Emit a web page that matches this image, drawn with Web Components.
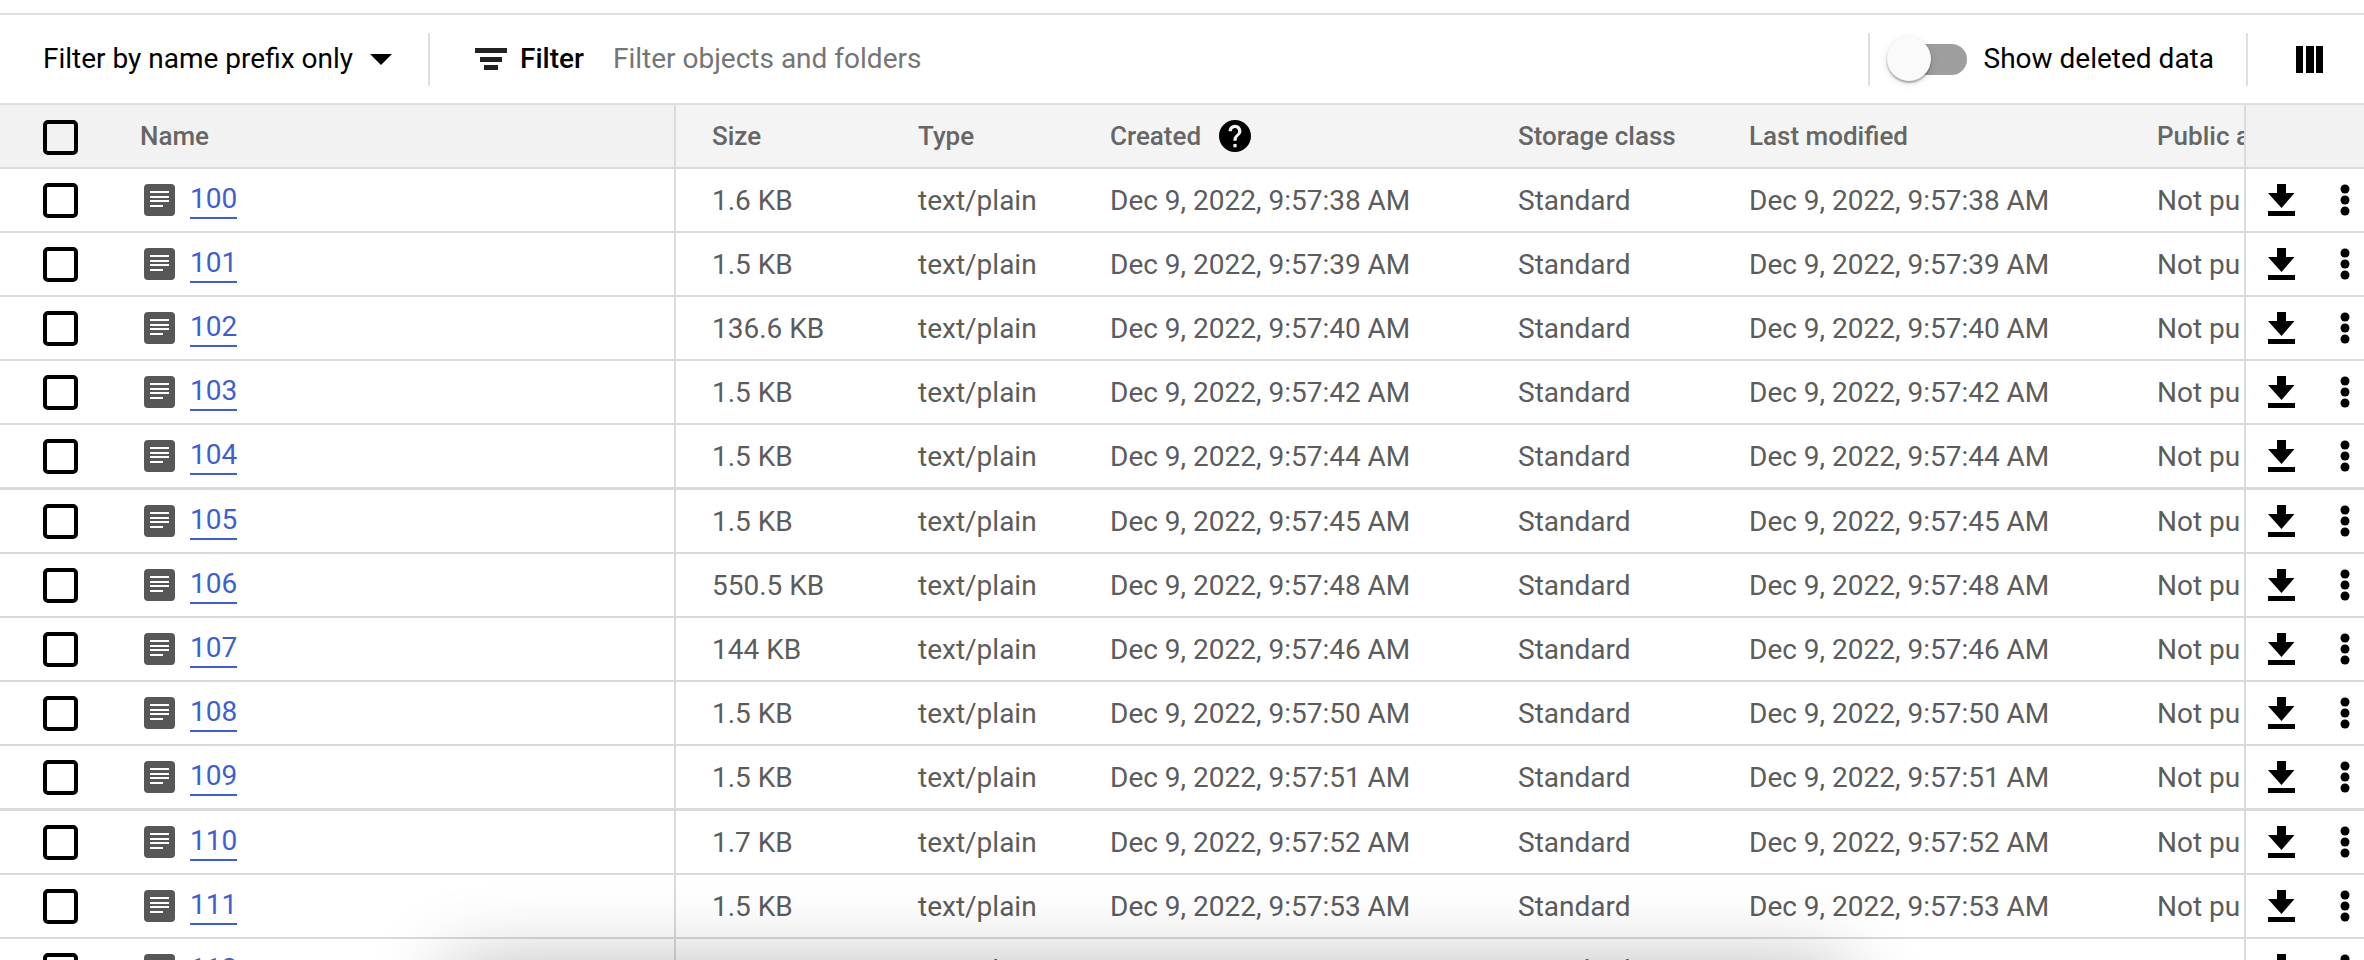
<!DOCTYPE html>
<html lang="en">
<head>
<meta charset="utf-8">
<title>Objects</title>
<style>
  body {
    margin: 0;
    background: #fff;
    font-family: Roboto, "Liberation Sans", sans-serif;
    font-size: 28px;
    overflow: hidden;
  }
</style>
</head>
<body>
<object-browser>
  <filter-bar></filter-bar>
  <object-table></object-table>
</object-browser>
<sheet-shadow></sheet-shadow>

<script>
const ICONS = {
  filter: '<path d="M0 0h32v5H0zM5 9h22v5H5zM9 17h14v5H9z" fill="#212121"/>',
  columns: '<path d="M0 0h7v27H0zM10 0h8v27h-8zM20 0h7v27h-7z"/>',
  file: '<rect width="31" height="32" rx="4" fill="#575757"/><path d="M6 7h19v2H6zM6 12h19v2H6zM6 16h19v2H6zM6 21h13v2H6z" fill="#fff"/>',
  help: '<path transform="scale(1.6) translate(-2 -2)" d="M12 2C6.48 2 2 6.48 2 12s4.48 10 10 10 10-4.48 10-10S17.52 2 12 2zm1 17h-2v-2h2v2zm2.07-7.75l-.9.92C13.45 12.9 13 13.5 13 15h-2v-.5c0-1.1.45-2.1 1.17-2.83l1.24-1.26c.37-.36.59-.86.59-1.41 0-1.1-.9-2-2-2s-2 .9-2 2H8c0-2.21 1.79-4 4-4s4 1.79 4 4c0 .88-.36 1.68-.93 2.25z"/>',
  download: '<path d="M9 0h9v9h8.500L13.500 24 0 9h9zM0 27h27v5H0z"/>',
  more: '<circle cx="5" cy="5" r="4.500"/><circle cx="5" cy="16" r="4.500"/><circle cx="5" cy="27" r="4.500"/>',
  caret: '<path d="M0 0h22L11 11z"/>',
};

function icon(name, w, h) {
  return `<svg class="${name}" width="${w}" height="${h}" viewBox="0 0 ${w} ${h}" aria-hidden="true">${ICONS[name]}</svg>`;
}

const OBJECTS = [
  ["100", "1.6 KB", "9:57:38"],
  ["101", "1.5 KB", "9:57:39"],
  ["102", "136.6 KB", "9:57:40"],
  ["103", "1.5 KB", "9:57:42"],
  ["104", "1.5 KB", "9:57:44"],
  ["105", "1.5 KB", "9:57:45"],
  ["106", "550.5 KB", "9:57:48"],
  ["107", "144 KB", "9:57:46"],
  ["108", "1.5 KB", "9:57:50"],
  ["109", "1.5 KB", "9:57:51"],
  ["110", "1.7 KB", "9:57:52"],
  ["111", "1.5 KB", "9:57:53"],
  ["112", "53.1 KB", "9:57:54"],
];

class ObjectBrowser extends HTMLElement {
  constructor() {
    super();
    this.attachShadow({ mode: "open" });
  }

  connectedCallback() {
    this.shadowRoot.innerHTML = `
      <style>
        :host {
          display: block;
          margin-top: 13px;
          border-top: 2px solid #e0e0e0;
          height: calc(100vh - 15px);
          overflow: hidden;
        }
      </style>
      <slot></slot>
    `;
  }
}

class ToggleSwitch extends HTMLElement {
  constructor() {
    super();
    this.attachShadow({ mode: "open" });
  }

  connectedCallback() {
    this.shadowRoot.innerHTML = `
      <style>
        :host { display: block; }
        label {
          display: flex;
          align-items: center;
          gap: 17px;
          line-height: 32px;
        }
        input {
          appearance: none;
          display: flex;
          align-items: center;
          margin: 0;
          width: 72px;
          height: 31px;
          border-radius: 16px;
          background: #9e9e9e;
        }
        input::before {
          content: "";
          flex: none;
          width: 44px;
          height: 44px;
          margin-left: -8px;
          border-radius: 50%;
          background: #fafafa;
          box-shadow: 0 2px 2px rgba(0,0,0, 0.3), 0 2px 8px rgba(0,0,0, 0.12);
        }
        input:checked { flex-direction: row-reverse; }
      </style>
      <label><input type="checkbox" role="switch"><slot></slot></label>
    `;
  }
}

class FilterBar extends HTMLElement {
  constructor() {
    super();
    this.attachShadow({ mode: "open" });
  }

  get styles() {
    return `
      :host {
        display: flex;
        align-items: center;
        height: 88px;
        border-bottom: 2px solid #e0e0e0;
        line-height: 32px;
      }
      button {
        font: inherit;
        color: #000;
        background: none;
        border: 0;
        padding: 0;
        display: flex;
        align-items: center;
      }
      svg { display: block; flex: none; }
      .mode { margin-left: 43px; gap: 17px; }
      .rule {
        width: 2px;
        height: 53px;
        background: #e0e0e0;
        flex: none;
      }
      .mode + .rule { margin-left: 36px; }
      label {
        display: flex;
        align-items: center;
        gap: 13px;
        margin-left: 45px;
        font-weight: 500;
      }
      .text {
        flex: 1;
        min-width: 0;
        font: inherit;
        color: #757575;
        border: 0;
        outline: 0;
        padding: 0;
        margin-left: 29px;
        background: none;
      }
      .text::placeholder { color: #757575; opacity: 1; }
      toggle-switch { margin: 0 32px 0 25px; }
      .cols { margin: 0 41px 0 48px; }
    `;
  }

  connectedCallback() {
    this.shadowRoot.innerHTML = `
      <style>${this.styles}</style>
      <button class="mode">Filter by name prefix only ${icon("caret", 22, 11)}</button>
      <div class="rule"></div>
      <label for="q">${icon("filter", 32, 22)}Filter</label>
      <input id="q" class="text" placeholder="Filter objects and folders">
      <div class="rule"></div>
      <toggle-switch>Show deleted data</toggle-switch>
      <div class="rule"></div>
      <button class="cols" aria-label="Columns">${icon("columns", 27, 27)}</button>
    `;
  }
}

class ObjectTable extends HTMLElement {
  constructor() {
    super();
    this.attachShadow({ mode: "open" });
  }

  get styles() {
    return `
      :host { display: block; color: #5c5c5c; }
      table {
        width: 100%;
        table-layout: fixed;
        border-collapse: separate;
        border-spacing: 0;
      }
      .c-check { width: 140px; }
      .c-name { width: 536px; }
      .c-size { width: 206px; }
      .c-type { width: 192px; }
      .c-created { width: 408px; }
      .c-class { width: 231px; }
      .c-modified { width: 408px; }
      .c-actions { width: 120px; }
      th, td {
        box-sizing: border-box;
        height: 64px;
        padding: 0 0 0 36px;
        border-bottom: 2px solid #dadada;
        text-align: left;
        font-weight: 400;
        line-height: 32px;
        white-space: nowrap;
        overflow: hidden;
      }
      td { padding-top: 2px; }
      th {
        background: #f4f4f4;
        color: #666;
        font-size: 26px;
        font-weight: 500;
      }
      tbody tr:nth-child(5n) td { height: 65px; border-bottom-width: 3px; }
      .check { padding: 0 0 0 43px; }
      th.check { padding-top: 2px; }
      .name { padding: 0; border-right: 2px solid #dadada; }
      .actions { padding: 0 0 0 22px; border-left: 2px solid #dadada; }
      th.name, th.check, th.actions { background: #f2f2f2; }
      .access { padding-right: 4px; }
      .access div { overflow: hidden; }
      input {
        appearance: none;
        display: block;
        box-sizing: border-box;
        width: 35px;
        height: 35px;
        margin: 0;
        border: 4px solid #000;
        border-radius: 5px;
      }
      .line { display: flex; align-items: center; }
      th .line { gap: 18px; }
      .file { margin: 0 15px 0 4px; }
      a {
        color: #3f5fcf;
        text-decoration: none;
        border-bottom: 2px solid #3f5fcf;
        line-height: 36px;
      }
      svg { display: block; flex: none; }
      button {
        background: none;
        border: 0;
        padding: 0;
        color: #000;
      }
      .actions .line { gap: 45px; }
    `;
  }

  row([name, size, time]) {
    const date = `Dec 9, 2022, ${time} AM`;
    return `
      <tr>
        <td class="check"><input type="checkbox" aria-label="Select ${name}"></td>
        <td class="name"><div class="line">${icon("file", 31, 32)}<a href="#${name}">${name}</a></div></td>
        <td>${size}</td>
        <td>text/plain</td>
        <td>${date}</td>
        <td>Standard</td>
        <td>${date}</td>
        <td class="access"><div>Not public</div></td>
        <td class="actions"><div class="line">
          <button aria-label="Download">${icon("download", 27, 32)}</button>
          <button aria-label="More actions">${icon("more", 10, 32)}</button>
        </div></td>
      </tr>`;
  }

  connectedCallback() {
    this.shadowRoot.innerHTML = `
      <style>${this.styles}</style>
      <table>
        <colgroup>
          <col class="c-check"><col class="c-name"><col class="c-size"><col class="c-type">
          <col class="c-created"><col class="c-class"><col class="c-modified"><col><col class="c-actions">
        </colgroup>
        <thead>
          <tr>
            <th class="check"><input type="checkbox" aria-label="Select all"></th>
            <th class="name">Name</th>
            <th>Size</th>
            <th>Type</th>
            <th><div class="line">Created ${icon("help", 32, 32)}</div></th>
            <th>Storage class</th>
            <th>Last modified</th>
            <th>Public access</th>
            <th class="actions"></th>
          </tr>
        </thead>
        <tbody>${OBJECTS.map(this.row).join("")}</tbody>
      </table>
    `;
  }
}

// Shadow of the sheet that waits just below the bottom edge of the window.
class SheetShadow extends HTMLElement {
  constructor() {
    super();
    this.attachShadow({ mode: "open" });
  }

  connectedCallback() {
    this.shadowRoot.innerHTML = `
      <style>
        :host {
          position: fixed;
          top: 100%;
          left: 19%;
          right: 22%;
          height: 120px;
          pointer-events: none;
          box-shadow: 0 8px 80px rgba(0,0,0, 0.3);
        }
      </style>
    `;
  }
}

customElements.define("toggle-switch", ToggleSwitch);
customElements.define("filter-bar", FilterBar);
customElements.define("object-table", ObjectTable);
customElements.define("object-browser", ObjectBrowser);
customElements.define("sheet-shadow", SheetShadow);
</script>
</body>
</html>
